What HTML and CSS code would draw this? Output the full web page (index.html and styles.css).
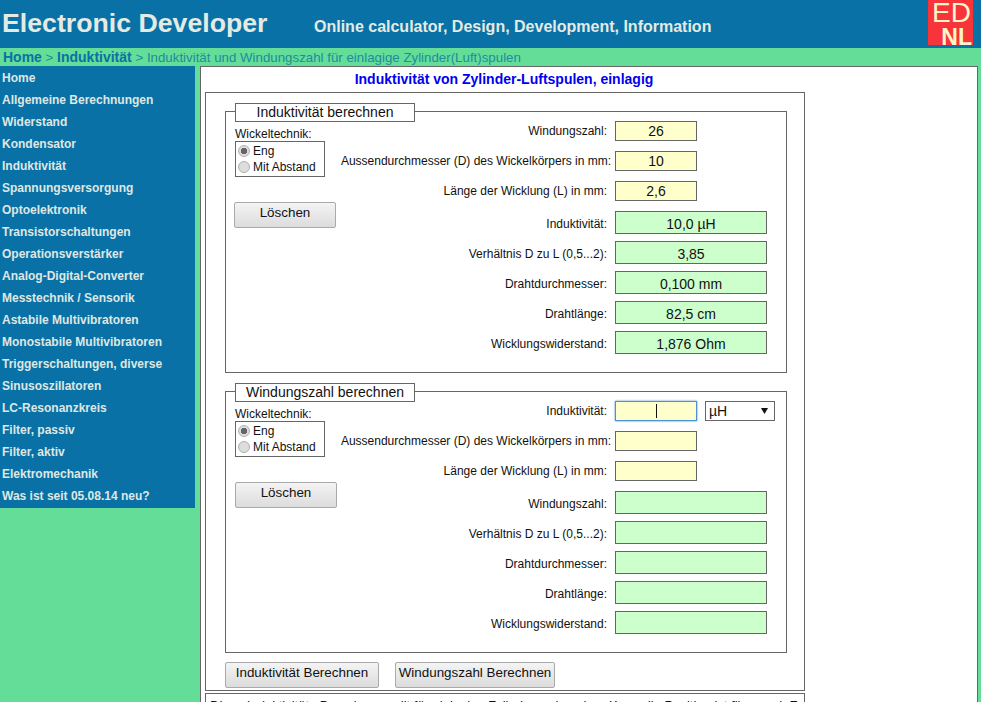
FILE: index.html
```html
<!DOCTYPE html>
<html>
	<head>
		<meta charset="utf-8">
		<title>Induktivität von Zylinder-Luftspulen, einlagig</title>
		<link rel="stylesheet" href="styles.css">
	</head>
	<body>
		<header class="kopf">
			<h1>Electronic Developer</h1>
			<p class="slogan">Online calculator, Design, Development, Information</p>
			<div class="logo"><span class="logo-ed">ED</span><span class="logo-nl">NL</span></div>
		</header>
		<nav class="pfad">
			<a href="#">Home</a> &gt; <a href="#">Induktivität</a> &gt; Induktivität und Windungszahl für einlagige Zylinder(Luft)spulen
		</nav>
		<div class="seite">
			<ul class="menu">
				<li><a href="#">Home</a></li>
				<li><a href="#">Allgemeine Berechnungen</a></li>
				<li><a href="#">Widerstand</a></li>
				<li><a href="#">Kondensator</a></li>
				<li><a href="#">Induktivität</a></li>
				<li><a href="#">Spannungsversorgung</a></li>
				<li><a href="#">Optoelektronik</a></li>
				<li><a href="#">Transistorschaltungen</a></li>
				<li><a href="#">Operationsverstärker</a></li>
				<li><a href="#">Analog-Digital-Converter</a></li>
				<li><a href="#">Messtechnik / Sensorik</a></li>
				<li><a href="#">Astabile Multivibratoren</a></li>
				<li><a href="#">Monostabile Multivibratoren</a></li>
				<li><a href="#">Triggerschaltungen, diverse</a></li>
				<li><a href="#">Sinusoszillatoren</a></li>
				<li><a href="#">LC-Resonanzkreis</a></li>
				<li><a href="#">Filter, passiv</a></li>
				<li><a href="#">Filter, aktiv</a></li>
				<li><a href="#">Elektromechanik</a></li>
				<li><a href="#">Was ist seit 05.08.14 neu?</a></li>
			</ul>
			<main class="inhalt">
				<h2>Induktivität von Zylinder-Luftspulen, einlagig</h2>
				<form class="rechner">
					<fieldset>
						<legend>Induktivität berechnen</legend>
						<div class="links">
							<div class="wickel-titel">Wickeltechnik:</div>
							<div class="wickel">
								<label><input type="radio" name="technik1" checked> Eng</label>
								<label><input type="radio" name="technik1"> Mit Abstand</label>
							</div>
							<button type="button" class="knopf loeschen">Löschen</button>
						</div>
						<div class="zeilen">
							<div class="zeile"><label>Windungszahl:</label><input class="eingabe" type="text" value="26"></div>
							<div class="zeile lang"><label>Aussendurchmesser (D) des Wickelkörpers in mm:</label><input class="eingabe" type="text" value="10"></div>
							<div class="zeile"><label>Länge der Wicklung (L) in mm:</label><input class="eingabe" type="text" value="2,6"></div>
							<div class="zeile ergebnis"><label>Induktivität:</label><input class="ausgabe" type="text" value="10,0 µH"></div>
							<div class="zeile ergebnis"><label>Verhältnis D zu L (0,5...2):</label><input class="ausgabe" type="text" value="3,85"></div>
							<div class="zeile ergebnis"><label>Drahtdurchmesser:</label><input class="ausgabe" type="text" value="0,100 mm"></div>
							<div class="zeile ergebnis"><label>Drahtlänge:</label><input class="ausgabe" type="text" value="82,5 cm"></div>
							<div class="zeile ergebnis"><label>Wicklungswiderstand:</label><input class="ausgabe" type="text" value="1,876 Ohm"></div>
						</div>
					</fieldset>
					<fieldset>
						<legend>Windungszahl berechnen</legend>
						<div class="links">
							<div class="wickel-titel">Wickeltechnik:</div>
							<div class="wickel">
								<label><input type="radio" name="technik2" checked> Eng</label>
								<label><input type="radio" name="technik2"> Mit Abstand</label>
							</div>
							<button type="button" class="knopf loeschen versetzt">Löschen</button>
						</div>
						<div class="zeilen">
							<div class="zeile"><label>Induktivität:</label><input class="eingabe aktiv" type="text"><select class="einheit"><option>µH</option><option>mH</option><option>nH</option></select></div>
							<div class="zeile lang"><label>Aussendurchmesser (D) des Wickelkörpers in mm:</label><input class="eingabe" type="text"></div>
							<div class="zeile"><label>Länge der Wicklung (L) in mm:</label><input class="eingabe" type="text"></div>
							<div class="zeile ergebnis"><label>Windungszahl:</label><input class="ausgabe" type="text"></div>
							<div class="zeile ergebnis"><label>Verhältnis D zu L (0,5...2):</label><input class="ausgabe" type="text"></div>
							<div class="zeile ergebnis"><label>Drahtdurchmesser:</label><input class="ausgabe" type="text"></div>
							<div class="zeile ergebnis"><label>Drahtlänge:</label><input class="ausgabe" type="text"></div>
							<div class="zeile ergebnis"><label>Wicklungswiderstand:</label><input class="ausgabe" type="text"></div>
						</div>
					</fieldset>
					<div class="aktionen">
						<button type="button" class="knopf berechnen-l">Induktivität Berechnen</button>
						<button type="button" class="knopf berechnen-n">Windungszahl Berechnen</button>
					</div>
				</form>
				<div class="hinweis">
					Diese Induktivitäts-Berechnung gilt für einlagige Zylinderspulen ohne Kern, die Position ist fliessend. Form
				</div>
			</main>
		</div>
	</body>
</html>
```

FILE: styles.css
```css
html, body {
	height: 702px;
	overflow: hidden;
}

body {
	margin: 0;
	background: #64dd98;
	font-family: "Liberation Sans", Arial, sans-serif;
	font-size: 12px;
	color: #111;
}

.kopf {
	display: flex;
	height: 48px;
	background: #0a71a6;
	color: #e4ebe4;
}

h1 {
	width: 314px;
	margin: 0;
	padding-left: 2px;
	box-sizing: border-box;
	font-size: 26.7px;
	line-height: 46px;
	white-space: nowrap;
}

.slogan {
	flex: 1;
	margin: 0;
	font-size: 16px;
	font-weight: bold;
	line-height: 53px;
}

.logo {
	display: flex;
	flex-direction: column;
	width: 45px;
	height: 45px;
	margin-right: 8px;
	background: #f73439;
	color: #fdf6c8;
}

.logo-ed {
	padding-left: 4px;
	font-size: 28px;
	line-height: 25px;
}

.logo-nl {
	padding-right: 1px;
	font-size: 23px;
	font-weight: bold;
	line-height: 24px;
	text-align: right;
}

.pfad {
	height: 18px;
	padding-left: 3px;
	color: #1e8c9c;
	font-size: 13.3px;
	line-height: 19px;
}

.pfad a {
	color: #0a71a6;
	font-size: 14px;
	font-weight: bold;
	text-decoration: none;
}

.seite {
	display: flex;
	align-items: flex-start;
}

.menu {
	flex: none;
	width: 195px;
	margin: 0 5px 0 0;
	padding: 1px 0 1px;
	background: #0a71a6;
	list-style: none;
}

.menu li {
	height: 22px;
	line-height: 22px;
	padding-left: 2px;
}

.menu a {
	color: #dfe7e4;
	font-weight: bold;
	text-decoration: none;
}

.inhalt {
	width: 778px;
	height: 700px;
	box-sizing: border-box;
	padding-left: 4px;
	background: #fff;
	border: 1px solid #666;
}

h2 {
	width: 598px;
	margin: 0;
	color: #0000f0;
	font-size: 14px;
	line-height: 25px;
	text-align: center;
	white-space: nowrap;
}

.rechner {
	width: 600px;
	box-sizing: border-box;
	padding: 0 17px 2px 19px;
	border: 1px solid #666;
}

fieldset {
	display: flex;
	margin: 9px 0 0;
	padding: 0 11px 11px 9px;
	border: 1px solid #666;
}

/* sitzt einen pixel unter der mitte des rahmens */
legend {
	position: relative;
	top: 1px;
	width: 180px;
	box-sizing: border-box;
	margin: 0 auto 0 0;
	padding: 0;
	border: 1px solid #666;
	background: #fff;
	font-size: 14px;
	line-height: 17px;
	text-align: center;
}

.links {
	flex: none;
	width: 102px;
	padding-top: 6px;
}

.wickel-titel {
	line-height: 14px;
}

.wickel {
	width: 90px;
	height: 36px;
	box-sizing: border-box;
	padding-top: 1px;
	border: 1px solid #666;
}

.wickel label {
	display: flex;
	align-items: center;
	gap: 3px;
	height: 16px;
}

.wickel input {
	appearance: none;
	flex: none;
	width: 12px;
	height: 12px;
	margin: 0 0 0 2px;
	border: 1px solid #b0b0b0;
	border-radius: 50%;
	background: #ddd;
}

.wickel input:checked {
	background: radial-gradient(circle, #666 0 3px, #ddd 3.5px);
}

.knopf {
	border: 1px solid #aaa;
	border-radius: 2px;
	background: linear-gradient(#f4f4f4, #dcdcdc);
	color: #111;
	font-family: inherit;
	font-size: 13.4px;
	height: 26px;
	padding: 0 0 5px;
}

.loeschen {
	display: block;
	width: 102px;
	margin: 25px 0 0 -1px;
}

.versetzt {
	margin-left: 0;
}

.zeilen {
	flex: 1;
}

.zeile {
	display: flex;
	height: 30px;
	box-sizing: border-box;
}

.zeile label {
	width: 278px;
	flex: none;
	padding-right: 8px;
	box-sizing: border-box;
	line-height: 20px;
	text-align: right;
	white-space: nowrap;
}

.zeile.lang label {
	padding-right: 4px;
}

.zeile.ergebnis label {
	line-height: 27px;
}

.eingabe, .ausgabe {
	box-sizing: border-box;
	border: 1px solid #666;
	border-radius: 0;
	padding: 0;
	color: #111;
	font-family: inherit;
	font-size: 14px;
	text-align: center;
	outline: none;
}

.eingabe {
	width: 82px;
	height: 20px;
	background: #ffffcc;
}

.ausgabe {
	width: 152px;
	height: 23px;
	padding-top: 2px;
	background: #ccffcc;
}

/* feld mit fokus, der cursor als hintergrund */
.eingabe.aktiv {
	border-color: #4d90d8;
	box-shadow: 0 0 2px #4d90d8;
	background: linear-gradient(#111, #111) center / 1px 14px no-repeat, #ffffcc;
}

.einheit {
	appearance: none;
	width: 70px;
	height: 20px;
	margin-left: 8px;
	padding: 0 0 0 3px;
	border: 1px solid #666;
	border-radius: 0;
	background: #fff url("data:image/svg+xml,%3Csvg xmlns='http://www.w3.org/2000/svg' width='7' height='6'%3E%3Cpath d='M0 0h7L3.5 6z' fill='%23111'/%3E%3C/svg%3E") no-repeat right 6px center;
	color: #111;
	font-family: inherit;
	font-size: 14px;
}

.aktionen {
	display: flex;
	gap: 16px;
	margin-top: 9px;
}

.berechnen-l {
	width: 154px;
}

.berechnen-n {
	width: 160px;
}

.hinweis {
	width: 600px;
	box-sizing: border-box;
	margin-top: 2px;
	padding: 4px 4px;
	border: 1px solid #666;
	font-size: 13px;
	white-space: nowrap;
}
```
